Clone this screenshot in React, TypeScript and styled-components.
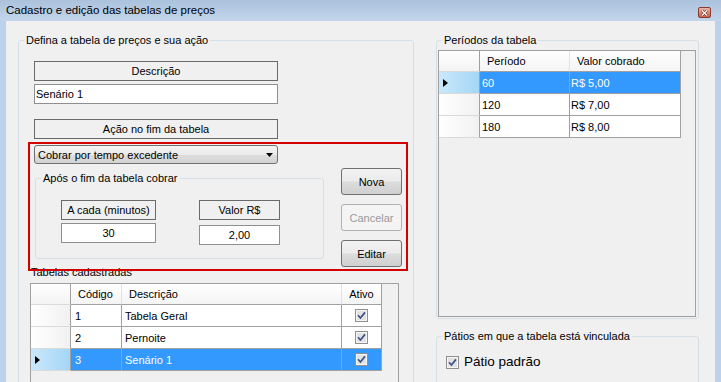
import styled, { createGlobalStyle } from "styled-components";

const GlobalStyle = createGlobalStyle`
  html, body {
    margin: 0;
    padding: 0;
    background: #f0f0f0;
  }
  body {
    font-family: "Liberation Sans", Arial, sans-serif;
    font-size: 11px;
    color: #000;
  }
  * {
    box-sizing: border-box;
  }
`;

const Window = styled.div`
  width: 721px;
  height: 382px;
  overflow: hidden;
  display: flex;
  flex-direction: column;
  background: #bcd1ea;
`;

const TitleBar = styled.div`
  height: 21px;
  flex: none;
  display: flex;
  align-items: center;
  padding-left: 6px;
  background: linear-gradient(to bottom, #abc2dd, #c2d5ea);
`;

const Title = styled.span`
  font-size: 11.5px;
  line-height: 13px;
`;

const CloseButton = styled.div`
  margin-left: auto;
  margin-right: 10px;
  align-self: flex-start;
  margin-top: 7px;
  width: 13px;
  height: 11px;
  border: 1px solid #8a3b2e;
  border-radius: 2px;
  background: linear-gradient(to bottom, #e9b4a7, #c4644f);
  display: flex;
  align-items: center;
  justify-content: center;
`;

const Frame = styled.div`
  flex: 1;
  min-height: 0;
  display: flex;
  padding: 0 6px;
`;

const Client = styled.div`
  flex: 1;
  display: flex;
  align-items: flex-start;
  background: #f0f0f0;
  padding: 13px 0 0 12px;
  overflow: hidden;
`;

const GroupBox = styled.fieldset<{ $w: number; $h?: number }>`
  margin: 0;
  padding: 0;
  min-width: 0;
  width: ${(p) => p.$w}px;
  ${(p) => (p.$h ? `height: ${p.$h}px;` : "")}
  border: 1px solid #d5dfe5;
  border-radius: 3px;
  flex: none;
`;

const Legend = styled.legend`
  margin-left: 5px;
  padding: 0 2px;
  font-size: 11px;
  line-height: 13px;
`;

const LeftBody = styled.div`
  display: flex;
  flex-direction: column;
  align-items: flex-start;
  padding-top: 14px;
`;

const FieldStack = styled.div`
  display: flex;
  flex-direction: column;
  margin-left: 15px;
`;

const CaptionBox = styled.div<{ $w: number; $mt?: number }>`
  width: ${(p) => p.$w}px;
  height: 20px;
  margin-top: ${(p) => p.$mt ?? 0}px;
  border: 1px solid #6a6a6a;
  background: #f0f0f0;
  display: flex;
  align-items: center;
  justify-content: center;
`;

const TextBox = styled.div<{ $w: number; $mt?: number; $center?: boolean }>`
  width: ${(p) => p.$w}px;
  height: 20px;
  margin-top: ${(p) => p.$mt ?? 0}px;
  border: 1px solid #8e8f8f;
  background: #fff;
  display: flex;
  align-items: center;
  justify-content: ${(p) => (p.$center ? "center" : "flex-start")};
  padding: 0 1px;
`;

const Highlight = styled.div`
  position: relative;
  z-index: 1;
  margin: 3px 0 0 9px;
  width: 380px;
  height: 129px;
  border: 2px solid #d40000;
  display: flex;
  padding: 1px 4px 0 4px;
`;

const HighlightMain = styled.div`
  display: flex;
  flex-direction: column;
  align-items: flex-start;
`;

const ComboBox = styled.div`
  width: 244px;
  height: 19px;
  border: 1px solid #707070;
  border-radius: 3px;
  background: linear-gradient(to bottom, #f3f3f3 0%, #ebebeb 50%, #dedede 51%, #d3d3d3 100%);
  display: flex;
  align-items: center;
  padding: 0 4px 0 3px;
`;

const ComboText = styled.span`
  flex: 1;
`;

const InnerGroup = styled(GroupBox)`
  margin: 8px 0 0 1px;
`;

const PairRow = styled.div`
  display: flex;
  gap: 43px;
  padding: 15px 0 0 25px;
`;

const PairCol = styled.div`
  display: flex;
  flex-direction: column;
`;

const ButtonColumn = styled.div`
  margin-left: auto;
  display: flex;
  flex-direction: column;
  gap: 9px;
  padding-top: 23px;
`;

const Button = styled.div<{ $disabled?: boolean }>`
  width: 61px;
  height: 27px;
  border-radius: 3px;
  display: flex;
  align-items: center;
  justify-content: center;
  border: 1px solid ${(p) => (p.$disabled ? "#adb2b5" : "#707070")};
  color: ${(p) => (p.$disabled ? "#9a9a9a" : "#000")};
  background: ${(p) =>
    p.$disabled
      ? "#f4f4f4"
      : "linear-gradient(to bottom, #f2f2f2 0%, #ebebeb 48%, #dddddd 52%, #cfcfcf 100%)"};
`;

const SectionLabel = styled.div`
  margin: -5px 0 0 12px;
  line-height: 13px;
`;

const GridFrame = styled.div<{ $w: number; $h: number }>`
  width: ${(p) => p.$w}px;
  height: ${(p) => p.$h}px;
  border: 1px solid #a0a0a0;
  background: #f0f0f0;
  overflow: hidden;
  flex: none;
`;

const LeftGrid = styled(GridFrame)`
  margin: 4px 0 0 11px;
`;

const RightGrid = styled(GridFrame)`
  margin: 3px 0 0 1px;
`;

const GridRow = styled.div<{ $cols: string; $h: number }>`
  display: grid;
  grid-template-columns: ${(p) => p.$cols};
  height: ${(p) => p.$h}px;
`;

const HeaderCorner = styled.div`
  background: linear-gradient(to bottom, #ffffff, #f3f3f3);
  border-right: 1px solid #a0a0a0;
  border-bottom: 1px solid #dadada;
`;

const ColumnHeader = styled.div<{ $center?: boolean; $last?: boolean }>`
  background: linear-gradient(to bottom, #ffffff, #f4f4f4);
  border-right: 1px solid ${(p) => (p.$last ? "#a0a0a0" : "#e2e2e2")};
  border-bottom: 1px solid #a0a0a0;
  display: flex;
  align-items: center;
  justify-content: ${(p) => (p.$center ? "center" : "flex-start")};
  padding-left: ${(p) => (p.$center ? 0 : 7)}px;
`;

const RowHeader = styled.div<{ $selected?: boolean }>`
  border-right: 1px solid #a0a0a0;
  border-bottom: 1px solid #dadada;
  background: ${(p) =>
    p.$selected
      ? "linear-gradient(to right, #cbe8fb, #a4d6f6)"
      : "linear-gradient(to right, #ffffff, #f1f1f1)"};
  display: flex;
  align-items: center;
  padding-left: 4px;
`;

const Cell = styled.div<{ $selected?: boolean; $pad: number; $center?: boolean }>`
  border-right: 1px solid #a0a0a0;
  border-bottom: 1px solid #a0a0a0;
  background: ${(p) => (p.$selected ? "#3399ff" : "#ffffff")};
  color: ${(p) => (p.$selected ? "#ffffff" : "#000000")};
  display: flex;
  align-items: center;
  justify-content: ${(p) => (p.$center ? "center" : "flex-start")};
  padding-left: ${(p) => (p.$center ? 0 : p.$pad)}px;
  white-space: nowrap;
`;

const RightColumn = styled.div`
  display: flex;
  flex-direction: column;
  margin-left: 22px;
`;

const PeriodGroup = styled(GroupBox)`
  padding-bottom: 1px;
`;

const PatioGroup = styled(GroupBox)`
  margin-top: 11px;
`;

const CheckRow = styled.div`
  display: flex;
  align-items: center;
  gap: 5px;
  padding: 12px 0 0 9px;
`;

const CheckLabel = styled.span`
  font-size: 13.5px;
  line-height: 14px;
`;

function CheckIcon() {
  return (
    <svg width="13" height="13" viewBox="0 0 13 13">
      <rect x="0.5" y="0.5" width="12" height="12" fill="#f6f6f6" stroke="#8f8f8f" />
      <rect x="2" y="2" width="9" height="9" fill="#e2e2e2" />
      <path d="M3 6.3 L5.4 9 L10 3.4" fill="none" stroke="#3d5188" strokeWidth="1.7" />
    </svg>
  );
}

function RowArrow() {
  return (
    <svg width="5" height="8" viewBox="0 0 5 8">
      <polygon points="0,0 5,4 0,8" fill="#000" />
    </svg>
  );
}

const tabelas = [
  { codigo: "1", descricao: "Tabela Geral", ativo: true },
  { codigo: "2", descricao: "Pernoite", ativo: true },
  { codigo: "3", descricao: "Senário 1", ativo: true },
];
const tabelaSelecionada = 2;

const periodos = [
  { periodo: "60", valor: "R$ 5,00" },
  { periodo: "120", valor: "R$ 7,00" },
  { periodo: "180", valor: "R$ 8,00" },
];
const periodoSelecionado = 0;

const LEFT_COLS = "40px 51px 220px 40px";
const RIGHT_COLS = "41px 90px 111px";

export default function App() {
  return (
    <>
      <GlobalStyle />
      <Window>
        <TitleBar>
          <Title>Cadastro e edição das tabelas de preços</Title>
          <CloseButton>
            <svg width="7" height="6" viewBox="0 0 7 6">
              <path d="M1 0.5 L6 5.5 M6 0.5 L1 5.5" stroke="#5a1f14" strokeWidth="2.4" />
              <path d="M1 0.5 L6 5.5 M6 0.5 L1 5.5" stroke="#ffffff" strokeWidth="1.3" />
            </svg>
          </CloseButton>
        </TitleBar>
        <Frame>
          <Client>
            <GroupBox $w={396} $h={360}>
              <Legend>Defina a tabela de preços e sua ação</Legend>
              <LeftBody>
                <FieldStack>
                  <CaptionBox $w={244}>Descrição</CaptionBox>
                  <TextBox $w={244} $mt={3}>Senário 1</TextBox>
                  <CaptionBox $w={244} $mt={15}>Ação no fim da tabela</CaptionBox>
                </FieldStack>
                <Highlight>
                  <HighlightMain>
                    <ComboBox>
                      <ComboText>Cobrar por tempo excedente</ComboText>
                      <svg width="7" height="4" viewBox="0 0 7 4">
                        <polygon points="0,0 7,0 3.5,4" fill="#000" />
                      </svg>
                    </ComboBox>
                    <InnerGroup $w={289} $h={87}>
                      <Legend>Após o fim da tabela cobrar</Legend>
                      <PairRow>
                        <PairCol>
                          <CaptionBox $w={95}>A cada (minutos)</CaptionBox>
                          <TextBox $w={95} $mt={3} $center>30</TextBox>
                        </PairCol>
                        <PairCol>
                          <CaptionBox $w={81}>Valor R$</CaptionBox>
                          <TextBox $w={81} $mt={5} $center>2,00</TextBox>
                        </PairCol>
                      </PairRow>
                    </InnerGroup>
                  </HighlightMain>
                  <ButtonColumn>
                    <Button>Nova</Button>
                    <Button $disabled>Cancelar</Button>
                    <Button>Editar</Button>
                  </ButtonColumn>
                </Highlight>
                <SectionLabel>Tabelas cadastradas</SectionLabel>
                <LeftGrid $w={369} $h={110}>
                  <GridRow $cols={LEFT_COLS} $h={21}>
                    <HeaderCorner />
                    <ColumnHeader>Código</ColumnHeader>
                    <ColumnHeader>Descrição</ColumnHeader>
                    <ColumnHeader $center $last>Ativo</ColumnHeader>
                  </GridRow>
                  {tabelas.map((t, i) => {
                    const sel = i === tabelaSelecionada;
                    return (
                      <GridRow key={t.codigo} $cols={LEFT_COLS} $h={22}>
                        <RowHeader $selected={sel}>{sel && <RowArrow />}</RowHeader>
                        <Cell $pad={4} $selected={sel}>{t.codigo}</Cell>
                        <Cell $pad={3} $selected={sel}>{t.descricao}</Cell>
                        <Cell $pad={0} $center $selected={sel}>
                          {t.ativo && <CheckIcon />}
                        </Cell>
                      </GridRow>
                    );
                  })}
                </LeftGrid>
              </LeftBody>
            </GroupBox>
            <RightColumn>
              <PeriodGroup $w={263}>
                <Legend>Períodos da tabela</Legend>
                <RightGrid $w={258} $h={267}>
                  <GridRow $cols={RIGHT_COLS} $h={21}>
                    <HeaderCorner />
                    <ColumnHeader>Período</ColumnHeader>
                    <ColumnHeader $last>Valor cobrado</ColumnHeader>
                  </GridRow>
                  {periodos.map((p, i) => {
                    const sel = i === periodoSelecionado;
                    return (
                      <GridRow key={p.periodo} $cols={RIGHT_COLS} $h={22}>
                        <RowHeader $selected={sel}>{sel && <RowArrow />}</RowHeader>
                        <Cell $pad={2} $selected={sel}>{p.periodo}</Cell>
                        <Cell $pad={1} $selected={sel}>{p.valor}</Cell>
                      </GridRow>
                    );
                  })}
                </RightGrid>
              </PeriodGroup>
              <PatioGroup $w={263} $h={70}>
                <Legend>Pátios em que a tabela está vinculada</Legend>
                <CheckRow>
                  <CheckIcon />
                  <CheckLabel>Pátio padrão</CheckLabel>
                </CheckRow>
              </PatioGroup>
            </RightColumn>
          </Client>
        </Frame>
      </Window>
    </>
  );
}
